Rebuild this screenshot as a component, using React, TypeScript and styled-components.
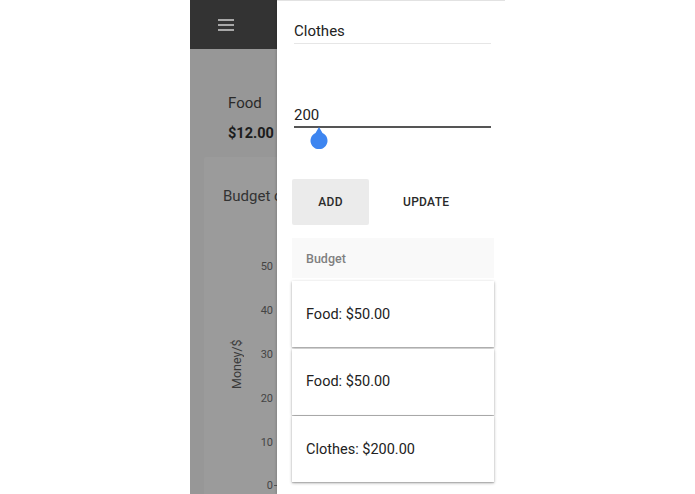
import React from "react";
import styled, { createGlobalStyle } from "styled-components";

const GlobalStyle = createGlobalStyle`
  html, body {
    margin: 0;
    padding: 0;
    background: #ffffff;
    font-family: Roboto, "Noto Sans", Arial, sans-serif;
  }
  * { box-sizing: border-box; }
`;

const entries = ["Food: $50.00", "Food: $50.00", "Clothes: $200.00"];
const ticks = [50, 40, 30, 20, 10, 0];

function App() {
  return (
    <>
      <GlobalStyle />
      <Page>
        <Phone>
          <TopBar>
            <svg width="16" height="12" viewBox="0 0 16 12">
              <rect x="0" y="0" width="16" height="2" fill="#a8a8a8" />
              <rect x="0" y="5" width="16" height="2" fill="#a8a8a8" />
              <rect x="0" y="10" width="16" height="2" fill="#a8a8a8" />
            </svg>
          </TopBar>
          <Summary>
            <SummaryLabel>Food</SummaryLabel>
            <SummaryValue>$12.00</SummaryValue>
          </Summary>
          <ChartCard>
            <ChartTitle>Budget chart</ChartTitle>
            <ChartBody>
              <YTitle>Money/$</YTitle>
              <Axis>
                {ticks.map((t) => (
                  <Tick key={t} $marked={t === 0}>
                    {t}
                  </Tick>
                ))}
              </Axis>
            </ChartBody>
          </ChartCard>

          <Drawer>
            <TextField>Clothes</TextField>
            <SliderField>
              <SliderValue>200</SliderValue>
              <Track />
              <Thumb width="20" height="22" viewBox="0 0 20 22">
                <path d="M10 0 L13.5 6 A8.5 8.5 0 1 1 6.5 6 Z" fill="#3d85f0" />
              </Thumb>
            </SliderField>
            <Buttons>
              <Button $filled>ADD</Button>
              <Button>UPDATE</Button>
            </Buttons>
            <ListHeader>Budget</ListHeader>
            <List>
              {entries.map((e, i) => (
                <Card key={i}>{e}</Card>
              ))}
            </List>
          </Drawer>
        </Phone>
      </Page>
    </>
  );
}

const Page = styled.div`
  width: 695px;
  height: 494px;
  display: flex;
  justify-content: center;
  overflow: hidden;
`;

const Phone = styled.div`
  position: relative;
  width: 315px;
  height: 494px;
  background: #979797;
  overflow: hidden;
`;

const TopBar = styled.div`
  height: 49px;
  background: #333333;
  display: flex;
  align-items: center;
  padding-left: 28px;
`;

const Summary = styled.div`
  display: flex;
  flex-direction: column;
  gap: 11px;
  padding: 44px 0 0 38px;
`;

const SummaryLabel = styled.div`
  font-size: 15px;
  line-height: 20px;
  color: #2a2a2a;
`;

const SummaryValue = styled(SummaryLabel)`
  font-size: 14.5px;
  font-weight: 700;
  color: #1c1c1c;
`;

const ChartCard = styled.div`
  margin: 13px 0 0 14px;
  height: 400px;
  background: #9b9b9b;
  padding: 29px 0 0 19px;
  border-radius: 2px;
`;

const ChartTitle = styled.div`
  font-size: 15px;
  line-height: 20px;
  color: #333333;
  white-space: nowrap;
`;

const ChartBody = styled.div`
  display: flex;
  margin-top: 39px;
`;

const YTitle = styled.div`
  width: 26px;
  height: 238px;
  display: flex;
  align-items: center;
  justify-content: center;
  writing-mode: vertical-rl;
  transform: rotate(180deg);
  font-size: 12.5px;
  color: #3a3a3a;
`;

const Axis = styled.div`
  width: 29px;
  display: flex;
  flex-direction: column;
`;

const Tick = styled.div<{ $marked?: boolean }>`
  height: 43.8px;
  display: flex;
  align-items: center;
  justify-content: flex-end;
  gap: 1px;
  font-size: 11px;
  color: #444444;
  &::after {
    content: "";
    width: 4px;
    height: 1px;
    background: ${(p) => (p.$marked ? "#555555" : "transparent")};
  }
`;

const Drawer = styled.div`
  position: absolute;
  top: 0;
  right: 0;
  bottom: 0;
  width: 228px;
  background: #ffffff;
  border-top: 1px solid #e2e2e2;
  box-shadow: -1px 0 2px rgba(0, 0, 0, 0.15);
  padding: 0 11px 0 15px;
  display: flex;
  flex-direction: column;
`;

const TextField = styled.div`
  margin: 19px 3px 0 2px;
  font-size: 15px;
  line-height: 22px;
  color: #222222;
  padding-bottom: 1px;
  border-bottom: 1px solid #e6e6e6;
`;

const SliderField = styled.div`
  position: relative;
  margin: 60px 3px 0 2px;
`;

const SliderValue = styled.div`
  font-size: 15px;
  line-height: 22px;
  color: #222222;
`;

const Track = styled.div`
  height: 2px;
  background: #555555;
`;

const Thumb = styled.svg`
  position: absolute;
  left: 15px;
  top: 23px;
`;

const Buttons = styled.div`
  display: flex;
  gap: 8px;
  margin-top: 51px;
`;

const Button = styled.button<{ $filled?: boolean }>`
  height: 46px;
  min-width: 77px;
  padding: 0 26px;
  border: none;
  border-radius: 2px;
  background: ${(p) => (p.$filled ? "#ebebeb" : "transparent")};
  font-family: Roboto, Arial, sans-serif;
  font-size: 12px;
  font-weight: 500;
  letter-spacing: 0.3px;
  color: #2a2a2a;
`;

const ListHeader = styled.div`
  margin-top: 13px;
  height: 40px;
  display: flex;
  align-items: center;
  padding-left: 14px;
  background: #f9f9f9;
  font-size: 12.5px;
  font-weight: 500;
  color: #808080;
`;

const List = styled.div`
  display: flex;
  flex-direction: column;
  gap: 1.5px;
  margin-top: 3px;
`;

const Card = styled.div`
  height: 66px;
  display: flex;
  align-items: center;
  padding-left: 14px;
  background: #ffffff;
  box-shadow: 0 1px 3px rgba(0, 0, 0, 0.3), 0 1px 1px rgba(0, 0, 0, 0.14);
  font-size: 14.5px;
  color: #222222;
`;

export default App;
